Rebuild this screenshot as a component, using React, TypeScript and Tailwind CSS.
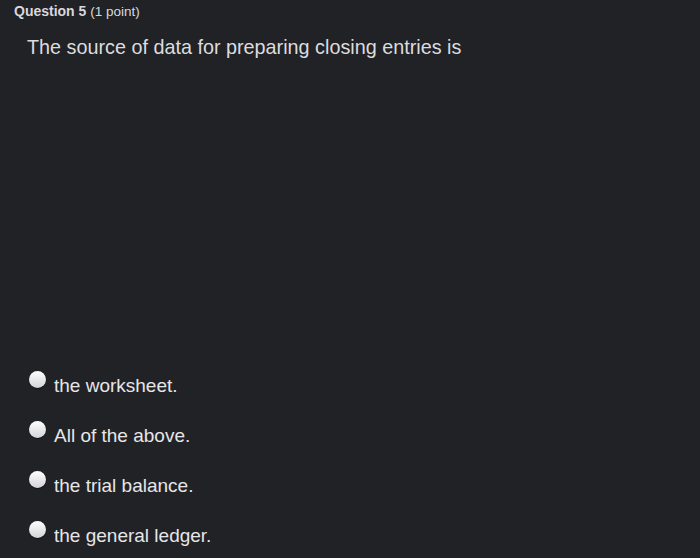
import React from "react";

const options = ["the worksheet.", "All of the above.", "the trial balance.", "the general ledger."];

export default function App() {
  return (
    <div className="w-[700px] h-[558px] bg-[#212226] overflow-hidden" style={{ fontFamily: '"Liberation Sans", Arial, sans-serif' }}>
      <div className="pl-[14px] pt-[3px] text-[14px] leading-[16px] text-[#d8d8dc]">
        <span className="font-bold">Question 5</span> <span className="text-[13.5px]">(1 point)</span>
      </div>
      <div className="pl-[27px] pt-[16px] text-[19.8px] leading-[23px] text-[#dcdcdf]">
        The source of data for preparing closing entries is
      </div>
      <div className="pt-[316px] pl-[29px] flex flex-col gap-[28px]">
        {options.map((o) => (
          <div key={o} className="flex items-start h-[22px]">
            <div className="w-[17px] h-[17px] rounded-full bg-gradient-to-b from-[#ffffff] to-[#d4d4d8] shadow-[0_1px_1px_rgba(0,0,0,0.5)] mt-[-4px] shrink-0" />
            <span className="ml-[8px] text-[19px] leading-[22px] text-[#e6e6e9]">{o}</span>
          </div>
        ))}
      </div>
    </div>
  );
}
